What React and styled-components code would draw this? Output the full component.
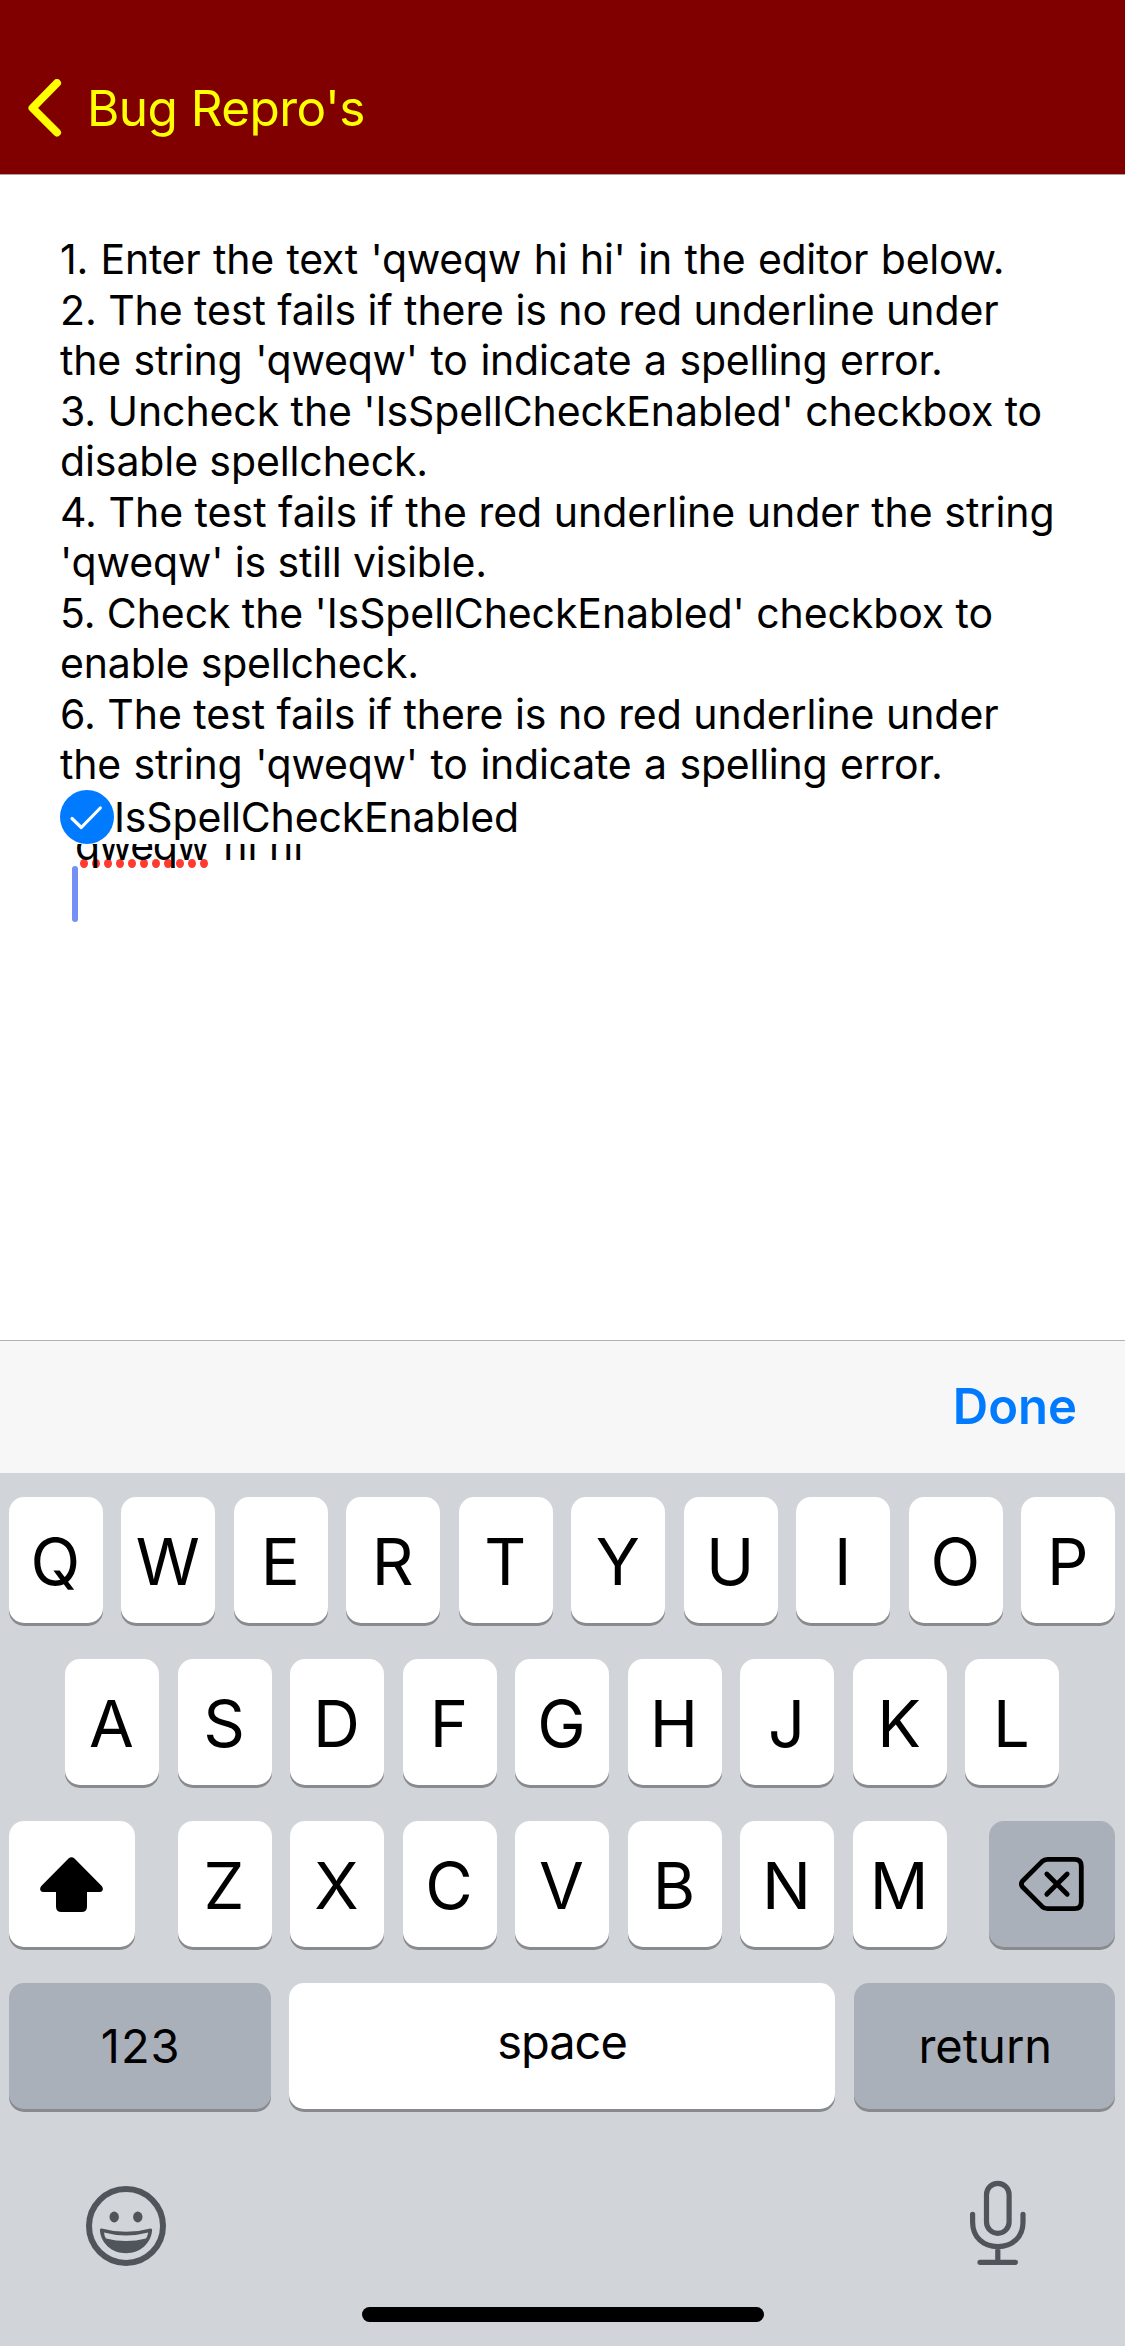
import React from "react";
import styled, { createGlobalStyle } from "styled-components";

const GlobalStyle = createGlobalStyle`
  *, *::before, *::after { box-sizing: border-box; }
  html, body { margin: 0; padding: 0; background: #fff; }
  button { font: inherit; color: inherit; border: 0; margin: 0; padding: 0; background: none; }
`;

const Screen = styled.div`
  display: flex;
  flex-direction: column;
  width: 1125px;
  height: 2346px;
  overflow: hidden;
  background: #fff;
  color: #000;
  font-family: Inter, "Liberation Sans", sans-serif;
`;

const NavBar = styled.header`
  display: flex;
  align-items: center;
  flex: none;
  height: 175px;
  padding: 42px 0 0 28px;
  background: #800000;
  border-bottom: 1px solid #a9a0a0;
  color: #ffff00;
`;

const BackButton = styled.button`
  display: flex;
  align-items: center;
  gap: 25px;
  font-size: 49.5px;
  line-height: 60px;
  letter-spacing: -0.56px;
  white-space: nowrap;
`;

const Content = styled.main`
  display: flex;
  flex-direction: column;
  flex: 1;
  min-height: 0;
  padding: 59px 0 0 60px;
  font-size: 41px;
  line-height: 50.5px;
`;

const Instructions = styled.div`
  display: flex;
  flex-direction: column;
  flex: none;
`;

const Line = styled.div`
  height: 50.5px;
  white-space: pre;
  letter-spacing: ${(p) => p.$tracking}px;
  word-spacing: ${(p) => p.$wordGap || 0}px;
`;

const CheckRow = styled.div`
  display: flex;
  align-items: center;
  flex: none;
  height: 54.5px;
  white-space: nowrap;
  letter-spacing: -0.15px;
`;

const Editor = styled.div`
  display: flex;
  flex-direction: column;
  flex: 1;
  min-height: 0;
  overflow: hidden;
  padding-left: 12px;
`;

const EditorLine = styled.div`
  display: flex;
  flex: none;
  gap: 14.5px;
  height: 50px;
  margin: -24px 0 0 3px;
  white-space: pre;
`;

const Misspelled = styled.span`
  position: relative;
  z-index: 0;
  letter-spacing: -1.35px;
`;

const SpellDots = styled.span`
  position: absolute;
  z-index: -1;
  left: 5px;
  top: 39px;
  display: flex;
  gap: 4px;
`;

const Dot = styled.i`
  width: 8px;
  height: 9px;
  border-radius: 50%;
  background: #ff3b30;
`;

const Caret = styled.div`
  flex: none;
  width: 6px;
  height: 56px;
  margin-top: -4px;
  border-radius: 3px;
  background: #7590f5;
`;

const AccessoryBar = styled.div`
  display: flex;
  align-items: center;
  justify-content: flex-end;
  flex: none;
  height: 133px;
  padding-right: 48px;
  background: #f7f7f7;
  border-top: 1px solid #b2b2b2;
`;

const DoneButton = styled.button`
  color: #007aff;
  font-size: 49px;
  font-weight: 600;
  line-height: 60px;
`;

const Keyboard = styled.section`
  display: flex;
  flex-direction: column;
  flex: none;
  height: 873px;
  padding-top: 24px;
  background: #d1d4d9;
`;

const KeyRow = styled.div`
  display: flex;
  justify-content: ${(p) => (p.$spread ? "space-between" : "center")};
  gap: ${(p) => (p.$spread ? 0 : "18.5px")};
  flex: none;
  height: 126px;
  margin-bottom: 36px;
  padding: 0 10px 0 9px;
`;

const KeyGroup = styled.div`
  display: flex;
  gap: 18.5px;
`;

const Key = styled.button`
  display: flex;
  align-items: center;
  justify-content: center;
  flex: none;
  width: ${(p) => p.$width || 94}px;
  height: 126px;
  padding: 3px 1px 0 0;
  border-radius: 15px;
  background: ${(p) => (p.$dark ? "#aab0ba" : "#fff")};
  box-shadow: 0 3px 0 #898a8d;
  font-size: 65px;
  line-height: 78px;
`;

const WordKey = styled(Key)`
  padding: 0 0 0 2px;
  font-size: 47px;
  line-height: 58px;
  letter-spacing: ${(p) => p.$tracking || 0}px;
`;

const SpaceKey = styled(WordKey)`
  padding: 0 0 8px;
`;

const IconKey = styled(Key)`
  padding: 0 1px 0 0;
`;

const BottomTools = styled.div`
  display: flex;
  align-items: flex-start;
  justify-content: space-between;
  flex: none;
  height: 162px;
  padding: 34px 97px 0 86px;
`;

const EmojiSlot = styled.button`
  display: flex;
  padding-top: 7px;
`;

const MicSlot = styled.button`
  display: flex;
`;

const HomeIndicator = styled.div`
  flex: none;
  align-self: center;
  width: 402px;
  height: 15px;
  margin-left: 1px;
  border-radius: 8px;
  background: #000;
`;

const ChevronIcon = () => (
  <svg width="34" height="58" viewBox="0 0 34 58" fill="none" stroke="currentColor" strokeWidth="8" strokeLinecap="round" strokeLinejoin="round">
    <path d="M29 4 4.5 29 29 53.5" />
  </svg>
);

const CheckCircle = () => (
  <svg width="54" height="54" viewBox="0 0 54 54" fill="none">
    <circle cx="27" cy="27" r="27" fill="#007aff" />
    <path d="M12 28.5 21.3 37.5 40.3 18" stroke="#fff" strokeWidth="3.2" strokeLinecap="round" strokeLinejoin="round" />
  </svg>
);

const ShiftIcon = () => (
  <svg width="63" height="55" viewBox="0 0 63 55" fill="#000">
    <path d="M28.5 1.5Q31.5-1 34.5 1.5L61.7 29Q63.5 31.5 62.5 33.5 61.5 35 59.5 35H47V49.5Q47 55 41.5 55H21.5Q16 55 16 49.5V35H3.5Q1.5 35 .5 33.5-.5 31.5 1.3 29Z" />
  </svg>
);

const DeleteIcon = () => (
  <svg width="65" height="54" viewBox="0 0 65 54" fill="none" stroke="#000" strokeWidth="4.8" strokeLinecap="round" strokeLinejoin="round">
    <path d="M28.5 2.4H55.5Q62.3 2.4 62.3 9V45Q62.3 51.6 55.5 51.6H28.5Q25.3 51.6 23 49.4L3.6 30Q1.2 27 3.6 24L23 4.6Q25.3 2.4 28.5 2.4Z" />
    <path d="M27.8 17 48.2 37.2M48.2 17 27.8 37.2" />
  </svg>
);

const EmojiIcon = () => (
  <svg width="80" height="80" viewBox="0 0 80 80" fill="#50555c">
    <circle cx="40" cy="40" r="37" fill="none" stroke="#50555c" strokeWidth="6" />
    <ellipse cx="28.2" cy="31" rx="4.7" ry="5.4" />
    <ellipse cx="51.8" cy="31" rx="4.7" ry="5.4" />
    <path
      fillRule="evenodd"
      d="M15.6 42.4Q40 49.2 64.4 42.4 66.4 42.2 66.1 44.6C64.8 57.6 54.5 67.2 40 67.2S15.2 57.6 13.9 44.6Q13.6 42.2 15.6 42.4ZM18 46.6Q18.3 50 20 52.4 40 57.6 60 52.4 61.7 50 62.2 46.6 40 52.6 18 46.6Z"
    />
  </svg>
);

const MicIcon = () => (
  <svg width="60" height="88" viewBox="0 0 60 88" fill="none" stroke="#50555c" strokeWidth="5.2" strokeLinecap="round">
    <rect x="18.5" y="4.3" width="22.6" height="50" rx="11.3" />
    <path d="M4.6 35.3V43C4.6 58 15 67.7 29.8 67.7S55 58 55 43V35.3M29.8 68V83M12 83.3H47.4" />
  </svg>
);

const STEPS = [
  { text: "1. Enter the text 'qweqw hi hi' in the editor below.", tracking: -0.3, wordGap: 1.5 },
  { text: "2. The test fails if there is no red underline under", tracking: -0.057 },
  { text: "the string 'qweqw' to indicate a spelling error.", tracking: -0.26, wordGap: 1.5 },
  { text: "3. Uncheck the 'IsSpellCheckEnabled' checkbox to", tracking: -0.087 },
  { text: "disable spellcheck.", tracking: -0.1 },
  { text: "4. The test fails if the red underline under the string", tracking: 0 },
  { text: "'qweqw' is still visible.", tracking: -0.15 },
  { text: "5. Check the 'IsSpellCheckEnabled' checkbox to", tracking: -0.1 },
  { text: "enable spellcheck.", tracking: -0.14 },
  { text: "6. The test fails if there is no red underline under", tracking: -0.04 },
  { text: "the string 'qweqw' to indicate a spelling error.", tracking: -0.26, wordGap: 1.5 },
];

const letters = (row) => row.split("").map((c) => <Key key={c}>{c}</Key>);

export default function App() {
  return (
    <Screen>
      <GlobalStyle />
      <NavBar>
        <BackButton>
          <ChevronIcon />
          Bug Repro's
        </BackButton>
      </NavBar>
      <Content>
        <Instructions>
          {STEPS.map((s, i) => (
            <Line key={i} $tracking={s.tracking} $wordGap={s.wordGap}>{s.text}</Line>
          ))}
        </Instructions>
        <CheckRow>
          <CheckCircle />
          IsSpellCheckEnabled
        </CheckRow>
        <Editor>
          <EditorLine>
            <Misspelled>
              qweqw
              <SpellDots>
                {Array.from({ length: 11 }, (_, i) => <Dot key={i} />)}
              </SpellDots>
            </Misspelled>
            <span>hi hi</span>
          </EditorLine>
          <Caret />
        </Editor>
      </Content>
      <AccessoryBar>
        <DoneButton>Done</DoneButton>
      </AccessoryBar>
      <Keyboard>
        <KeyRow>{letters("QWERTYUIOP")}</KeyRow>
        <KeyRow>{letters("ASDFGHJKL")}</KeyRow>
        <KeyRow $spread>
          <IconKey $width={126}><ShiftIcon /></IconKey>
          <KeyGroup>{letters("ZXCVBNM")}</KeyGroup>
          <IconKey $width={126} $dark><DeleteIcon /></IconKey>
        </KeyRow>
        <KeyRow $spread>
          <WordKey $width={261.5} $dark $tracking={1}>123</WordKey>
          <SpaceKey $width={546.5} $tracking={-1}>space</SpaceKey>
          <WordKey $width={261.5} $dark>return</WordKey>
        </KeyRow>
        <BottomTools>
          <EmojiSlot><EmojiIcon /></EmojiSlot>
          <MicSlot><MicIcon /></MicSlot>
        </BottomTools>
        <HomeIndicator />
      </Keyboard>
    </Screen>
  );
}
